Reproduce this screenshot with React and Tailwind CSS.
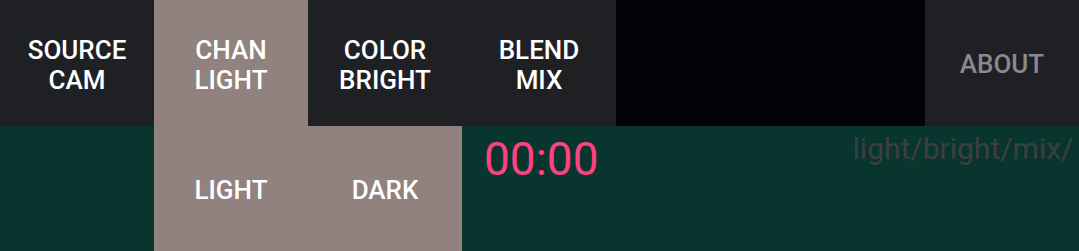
export default function App() {
  const topButtons = [
    { label: ['SOURCE', 'CAM'], active: false },
    { label: ['CHAN', 'LIGHT'], active: true },
    { label: ['COLOR', 'BRIGHT'], active: false },
    { label: ['BLEND', 'MIX'], active: false },
  ]

  return (
    <div className="w-[1079px] h-[251px] overflow-hidden bg-[#09352f]" style={{ fontFamily: 'Roboto, "Liberation Sans", sans-serif' }}>
      {/* Top menu */}
      <div className="flex h-[126px]">
        {topButtons.map((btn, i) => (
          <div
            key={i}
            className={`w-[154px] flex flex-col items-center justify-center pt-[3px] text-white font-medium text-[26px] leading-[30px] ${
              btn.active ? 'bg-[#918280]' : 'bg-[#1f2024]'
            }`}
          >
            {btn.label.map((line) => (
              <span key={line}>{line}</span>
            ))}
          </div>
        ))}
        <div className="flex-1 bg-[#020206]" />
        <div className="w-[154px] flex items-center justify-center pt-[3px] bg-[#1f2024] text-[#8a8a8d] font-medium text-[26px]">
          ABOUT
        </div>
      </div>

      {/* Bottom panel */}
      <div className="flex h-[125px]">
        <div className="w-[154px]" />
        <div className="w-[308px] flex bg-[#918280]">
          <div className="w-[154px] flex items-center justify-center text-white font-medium text-[26px] pt-[3px]">LIGHT</div>
          <div className="w-[154px] flex items-center justify-center text-white font-medium text-[26px] pt-[3px]">DARK</div>
        </div>
        <div className="flex-1 flex items-start overflow-hidden">
          <div className="pl-[22px] pt-[5px] text-[46px] leading-[56px] text-[#ff4081]">00:00</div>
          <div className="ml-[254px] pt-[3px] text-[30px] leading-[40px] text-[#3d3f3f] whitespace-nowrap">
            light/bright/mix/
          </div>
        </div>
      </div>
    </div>
  )
}
